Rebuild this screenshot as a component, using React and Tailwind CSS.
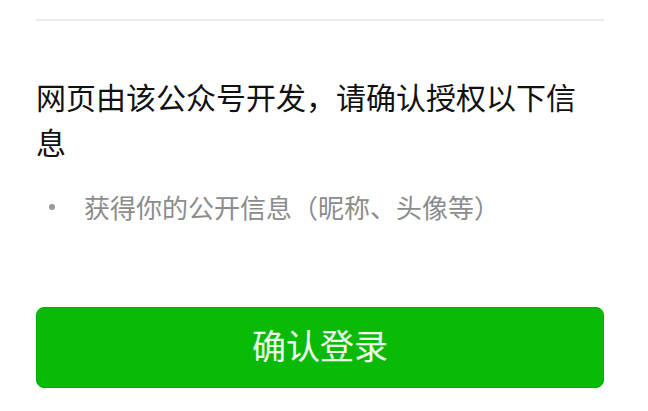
export default function App() {
  return (
    <div className="w-[648px] h-[411px] overflow-hidden bg-white pl-[36px] pr-[44px] font-['Noto_Sans_CJK_SC','Noto_Sans',sans-serif]">
      <div className="pt-[19px]">
        <div className="h-[2px] bg-[#ececec]" />
      </div>

      <h1 className="mt-[53px] text-[30px] leading-[45px] font-normal text-[#111111]">
        网页由该公众号开发，请确认授权以下信息
      </h1>

      <ul className="mt-[25px]">
        <li className="flex items-center text-[26px] leading-[36px] text-[#8c8c8c]">
          <span className="ml-[13px] mr-[29px] h-[6px] w-[6px] shrink-0 rounded-full bg-[#999999]" />
          获得你的公开信息（昵称、头像等）
        </li>
      </ul>

      <button className="mt-[82px] flex h-[81px] w-[568px] items-center justify-center rounded-[8px] border border-[#08a808] bg-[#09bb07] pb-[6px] text-[34px] text-[#effbef]">
        确认登录
      </button>
    </div>
  )
}
